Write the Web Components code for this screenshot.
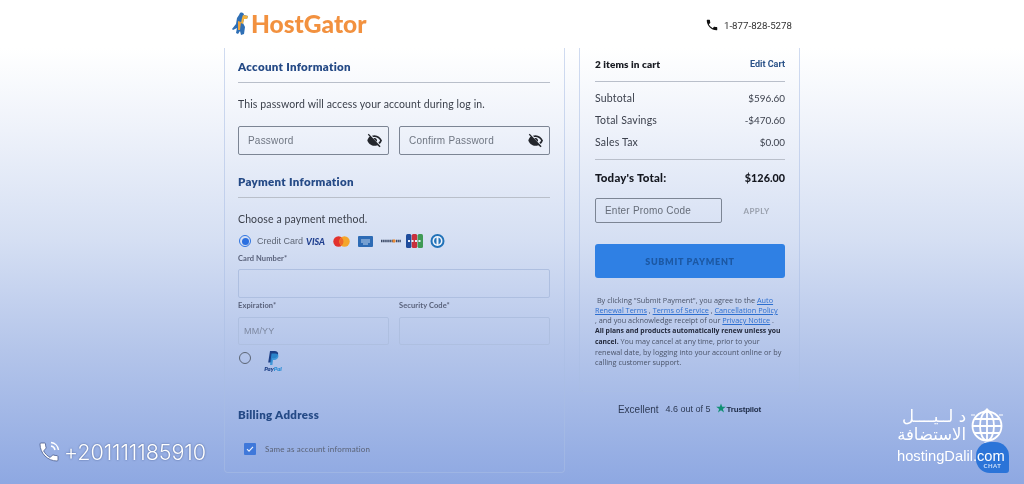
<!DOCTYPE html>
<html lang="en">
<head>
<meta charset="utf-8">
<title>HostGator checkout</title>
<style>
  html, body { margin: 0; height: 484px; overflow: hidden; }
  body {
    font-family: 'Lato', sans-serif;
    background: linear-gradient(180deg, #fff 0, #fff 48px, #eef2fa 130px, #d5dff3 240px, #b4c5ea 350px, #8ea8e2 484px);
    color: #2b3140;
    filter: blur(.35px);
  }
  .page { display: flex; justify-content: flex-start; gap: 14px; padding-left: 224px; align-items: flex-start; }
  .side { display: flex; flex-direction: column; align-items: center; width: 221px; }
</style>
</head>
<body>
<site-header></site-header>
<div class="page">
  <checkout-form></checkout-form>
  <div class="side">
    <order-summary></order-summary>
    <trust-line></trust-line>
  </div>
</div>
<phone-badge></phone-badge>
<brand-badge></brand-badge>

<script>
const PHONE = 'M6.6 10.8c1.4 2.8 3.8 5.1 6.6 6.6l2.2-2.2c.3-.3.7-.4 1-.2 1.1.4 2.3.6 3.6.6.6 0 1 .4 1 1V20c0 .6-.4 1-1 1C10.6 21 3 13.4 3 4c0-.6.4-1 1-1h3.5c.6 0 1 .4 1 1 0 1.3.2 2.5.6 3.6.1.3 0 .7-.2 1z';
const EYE_OFF = 'M12 6.5c3.8 0 7.2 2.2 9 5.5-.7 1.4-1.7 2.5-2.9 3.4l2.3 2.3c1.5-1.4 2.7-3.5 3.6-5.7C22 7 17.400 3.500 12 3.500c-1.500 0-2.900.3-4.200.8l2.200 2.200c.6-.1 1.300-.2 2-.2zM2.700 1.300 1.300 2.700l3 3C2.700 7 1.300 9.300.5 12c1.500 4.500 6.100 8.500 11.500 8.500 1.600 0 3.100-.3 4.500-.9l3.800 3.100 1.400-1.400z';

class SiteHeader extends HTMLElement {
  connectedCallback() {
    this.attachShadow({ mode: 'open' });
    this.shadowRoot.innerHTML = `
      <style>
        :host { display: flex; height: 48px; background: #fff; align-items: center; padding-left: 231px; }
        .logo { display: flex; align-items: center; gap: 2px; width: 474px; }
        .name { font: 900 24.500px 'Lato', sans-serif; color: #f2913f; letter-spacing: 0; position: relative; top: -1px; }
        .phone { display: flex; align-items: center; gap: 5px; font: 400 9.700px 'Roboto', sans-serif; color: #333; position: relative; top: 1px; }
      </style>
      <div class="logo">
        <svg width="18" height="25" viewBox="0 0 18 25">
          <path d="M9 1c2-1 4 0 4 2l4 1-1 3-3 0-1 4 2 4-1 7-3 1-1-4-2 3-2-1 1-5-4 2-1-1 4-5 1-6 2-3z" fill="#2f6fb5"/>
          <path d="M12 3l5 1-1 3-3 0-1 5-2-1 1-5z" fill="#f4b23c"/>
          <path d="M7 9l3 1-1 8-2 0z" fill="#f0a23a"/>
        </svg>
        <span class="name">HostGator</span>
      </div>
      <div class="phone">
        <svg width="14" height="14" viewBox="0 0 24 24"><path d="${PHONE}" fill="#111"/></svg>
        <span>1-877-828-5278</span>
      </div>`;
  }
}

class SectionTitle extends HTMLElement {
  connectedCallback() {
    this.attachShadow({ mode: 'open' });
    this.shadowRoot.innerHTML = `
      <style>
        :host { display: block; font: 800 11.500px 'Lato', sans-serif; color: #254a86; letter-spacing: .3px; line-height: 14px; }
        :host([rule]) { border-bottom: 1px solid #b9bfca; padding-bottom: 8px; }
      </style>
      <slot></slot>`;
  }
}

class TextField extends HTMLElement {
  connectedCallback() {
    this.attachShadow({ mode: 'open' });
    const eye = this.hasAttribute('eye')
      ? `<svg width="15" height="15" viewBox="0 0 24 24"><path d="${EYE_OFF}" fill="#23262c"/><path d="M12 8a4 4 0 0 0-2 .5l5.500 5.500A4 4 0 0 0 12 8z" fill="#23262c"/></svg>`
      : '';
    this.shadowRoot.innerHTML = `
      <style>
        :host { display: flex; align-items: center; justify-content: space-between; box-sizing: border-box; height: 29px; padding: 0 6px 1px 9px;
          border: 1px solid #7c8594; border-radius: 2px; font: 400 10px 'Liberation Sans', sans-serif; color: #6f7682; letter-spacing: .2px; }
        :host([pale]) { border-color: #aebfe0; padding-bottom: 0; }
      </style>
      <span><slot></slot></span>${eye}`;
  }
}

class FieldLabel extends HTMLElement {
  connectedCallback() {
    this.attachShadow({ mode: 'open' });
    this.shadowRoot.innerHTML = `
      <style>:host { display: block; font: 700 7.500px 'Lato', sans-serif; color: #59617a; line-height: 10px; letter-spacing: .1px; }</style>
      <slot></slot>`;
  }
}

class CardLogos extends HTMLElement {
  connectedCallback() {
    this.attachShadow({ mode: 'open' });
    this.shadowRoot.innerHTML = `
      <style>
        :host { display: flex; align-items: center; gap: 8px; }
        .visa { font: italic 900 9px 'Lato', sans-serif; color: #1f3f8f; width: 19px; }
      </style>
      <span class="visa">VISA</span>
      <svg width="17" height="11" viewBox="0 0 17 11"><circle cx="5.500" cy="5.500" r="5.200" fill="#e2322d"/><circle cx="11.500" cy="5.500" r="5.200" fill="#f5a62b"/><path d="M8.500 1.400a5.200 5.200 0 0 1 0 8.200 5.200 5.200 0 0 1 0-8.200z" fill="#f0692a"/></svg>
      <svg width="15" height="11" viewBox="0 0 15 11"><rect width="15" height="11" rx="1" fill="#2d6bb5"/><path d="M3 4h9M3 6h9M5 8h5" stroke="#cfe0f4" stroke-width=".9"/></svg>
      <svg width="20" height="6" viewBox="0 0 20 6"><path d="M0 3h12" stroke="#3c4a66" stroke-width="2.400" stroke-dasharray="1.500 .6"/><circle cx="13" cy="3" r="1.700" fill="#e98a35"/><path d="M15 3h5" stroke="#3c4a66" stroke-width="2.400" stroke-dasharray="1.500 .6"/></svg>
      <svg width="17" height="14" viewBox="0 0 17 14" style="margin-left:-3px"><rect width="5.400" height="14" rx="1.500" fill="#1f4c9c"/><rect x="5.800" width="5.400" height="14" rx="1.500" fill="#c9303d"/><rect x="11.600" width="5.400" height="14" rx="1.500" fill="#3f9a55"/><path d="M2 7h13" stroke="#e8eef8" stroke-width="2" stroke-dasharray="2 1.500"/></svg>
      <svg width="15" height="14" viewBox="0 0 15 14" style="margin-left:-1px"><circle cx="7.500" cy="7" r="7" fill="#2172b8"/><circle cx="7.500" cy="7" r="5" fill="#eef3fb"/><path d="M6.500 3.500a3.700 3.700 0 0 0 0 7zM8.500 3.500a3.700 3.700 0 0 1 0 7z" fill="#2172b8"/></svg>`;
  }
}

class RadioDot extends HTMLElement {
  connectedCallback() {
    this.attachShadow({ mode: 'open' });
    this.shadowRoot.innerHTML = `
      <style>
        :host { display: block; box-sizing: border-box; width: 12px; height: 12px; border-radius: 50%; border: 1px solid #5b6474; flex: none; }
        :host([on]) { border-color: #2f74e0; padding: 1.500px; }
        :host([on]) i { display: block; width: 100%; height: 100%; border-radius: 50%; background: #2a6fe0; }
      </style>
      <i></i>`;
  }
}

class CheckoutForm extends HTMLElement {
  connectedCallback() {
    this.attachShadow({ mode: 'open' });
    this.shadowRoot.innerHTML = `
      <style>
        :host { display: block; box-sizing: border-box; width: 341px; height: 425px; padding: 12px 14px 0 13px; border: 1px solid rgba(170,190,228,.55); border-top: 0;
          border-radius: 0 0 4px 4px; font: 400 10.500px 'Lato', sans-serif; color: #3a3f4a; }
        .lead { line-height: 14px; letter-spacing: .12px; }
        .pair { display: grid; grid-template-columns: 151px 151px; gap: 10px; }
        .method { display: flex; align-items: center; padding-left: 1px; }
        .cc { font: 400 9px 'Liberation Sans', sans-serif; color: #5e6675; margin: 0 3px 0 6px; }
        .check { display: flex; align-items: center; gap: 9px; font: 400 8px 'Lato', sans-serif; color: #5a6275; margin: 21px 0 0 6px; letter-spacing: .15px; }
        .box { width: 12px; height: 12px; display: block; }
        .paypal { display: flex; align-items: flex-start; gap: 11px; margin-top: 6px; height: 21px; padding-left: 1px; }
        .paypal radio-dot { margin-top: 1px; }
        .pp { display: flex; flex-direction: column; align-items: center; gap: 1px; width: 22px; }
        .pp b { font: italic 800 6px 'Lato', sans-serif; color: #1d3f86; line-height: 6px; }
        .pp b span { color: #2d8fd6; }
      </style>
      <section-title rule>Account Information</section-title>
      <div class="lead" style="margin-top:14px">This password will access your account during log in.</div>
      <div class="pair" style="margin-top:15px">
        <text-field eye>Password</text-field>
        <text-field eye>Confirm Password</text-field>
      </div>
      <section-title rule style="margin-top:20px">Payment Information</section-title>
      <div class="lead" style="margin-top:14px">Choose a payment method.</div>
      <div class="method" style="margin-top:8px;height:14px">
        <radio-dot on></radio-dot>
        <span class="cc">Credit Card</span>
        <card-logos></card-logos>
      </div>
      <field-label style="margin-top:6px">Card Number*</field-label>
      <text-field pale style="margin-top:5px"></text-field>
      <div class="pair" style="margin-top:3px">
        <field-label>Expiration*</field-label>
        <field-label>Security Code*</field-label>
      </div>
      <div class="pair" style="margin-top:6px">
        <text-field pale style="height:28px;font-size:9px;color:#7d88a0;padding-left:5px">MM/YY</text-field>
        <text-field pale style="height:28px"></text-field>
      </div>
      <div class="paypal">
        <radio-dot></radio-dot>
        <div class="pp">
          <svg width="11" height="14" viewBox="0 0 11 14"><path d="M2 0h4.500c2.600 0 4 1.300 3.600 3.600C9.700 6 8 7.200 5.600 7.200H4L3.200 11.500H.2z" fill="#1d3f86"/><path d="M3.500 2.500h4c1.800 0 3.200 1 2.900 3.100-.4 2.300-2 3.500-4.300 3.500H5L4.400 14H2z" fill="#2d8fd6" opacity=".85"/></svg>
          <b>Pay<span>Pal</span></b>
        </div>
      </div>
      <section-title style="margin-top:36px">Billing Address</section-title>
      <div class="check">
        <svg class="box" viewBox="0 0 12 12"><rect width="12" height="12" rx="1" fill="#3f78da"/><path d="M3 6.200l2 2 4-4.400" fill="none" stroke="#e6eefc" stroke-width="1.200"/></svg>
        <span>Same as account information</span>
      </div>`;
  }
}

class SummaryRow extends HTMLElement {
  connectedCallback() {
    this.attachShadow({ mode: 'open' });
    this.shadowRoot.innerHTML = `
      <style>
        :host { display: flex; justify-content: space-between; align-items: center; height: 22px; font: 400 10.500px 'Lato', sans-serif; color: #3c414d; letter-spacing: .2px; }
        :host([total]) { font-weight: 900; font-size: 11.500px; color: #14171f; }
        .v { font-size: .94em; letter-spacing: 0; }
      </style>
      <span><slot></slot></span><span class="v">${this.getAttribute('value')}</span>`;
  }
}

class OrderSummary extends HTMLElement {
  connectedCallback() {
    this.attachShadow({ mode: 'open' });
    this.shadowRoot.innerHTML = `
      <style>
        :host { display: block; box-sizing: border-box; width: 221px; height: 344px; padding: 9px 14px 0 15px; border: 1px solid rgba(170,190,228,.55); border-top: 0;
          border-radius: 0 0 4px 4px; font: 400 10px 'Lato', sans-serif; }
        .top { display: flex; justify-content: space-between; align-items: center; height: 14px; padding-bottom: 10px; border-bottom: 1px solid #b9bfca; }
        .top b { font: 800 10px 'Lato', sans-serif; color: #181b22; letter-spacing: .1px; }
        .top a { font: 700 9px 'Roboto', sans-serif; color: #2a5288; }
        .rows { margin-top: 5px; padding-bottom: 6px; border-bottom: 1px solid #b9bfca; }
        .promo { display: flex; align-items: center; margin-top: 10px; }
        .input { box-sizing: border-box; width: 127px; height: 25px; padding-left: 9px; display: flex; align-items: center; border: 1px solid #7c8594; border-radius: 2px;
          font: 400 10px 'Liberation Sans', sans-serif; color: #666d79; letter-spacing: .2px; }
        .apply { flex: 1; text-align: center; font: 700 8px 'Lato', sans-serif; color: #9aa1ae; letter-spacing: .4px; padding-left: 6px; }
        .submit { display: flex; align-items: center; justify-content: center; height: 34px; margin-top: 21px; background: #2f80e4; border-radius: 3px;
          font: 800 9px 'Lato', sans-serif; letter-spacing: .7px; color: #1c58a4; }
        .terms { margin: 17px 0 0; font: 400 7.300px/10px 'Open Sans', sans-serif; color: #4a5368; }
        .terms a { color: #2d6fd0; text-decoration: underline; }
        .terms b { color: #22283a; font-size: 6.800px; }
      </style>
      <div class="top"><b>2 items in cart</b><a>Edit Cart</a></div>
      <div class="rows">
        <summary-row value="$596.60">Subtotal</summary-row>
        <summary-row value="-$470.60">Total Savings</summary-row>
        <summary-row value="$0.00">Sales Tax</summary-row>
      </div>
      <summary-row total value="$126.00" style="margin-top:6px">Today's Total:</summary-row>
      <div class="promo"><div class="input">Enter Promo Code</div><div class="apply">APPLY</div></div>
      <div class="submit">SUBMIT PAYMENT</div>
      <p class="terms">&nbsp;By clicking "Submit Payment", you agree to the <a>Auto Renewal Terms</a> , <a>Terms of Service</a> , <a>Cancellation Policy</a><br>, and you acknowledge receipt of our <a>Privacy Notice</a> .<br><b>All plans and products automatically renew unless you cancel.</b> You may cancel at any time, prior to your renewal date, by logging into your account online or by calling customer support.</p>`;
  }
}

class TrustLine extends HTMLElement {
  connectedCallback() {
    this.attachShadow({ mode: 'open' });
    this.shadowRoot.innerHTML = `
      <style>
        :host { display: flex; align-items: center; margin-top: 10px; height: 14px; font: 400 9px 'Liberation Sans', sans-serif; color: #2d3a55; }
        .ex { font-size: 10px; margin-right: 7px; }
        .tp { font-weight: 700; font-size: 8px; color: #22304c; letter-spacing: -.2px; }
        svg { margin: 0 1px 2px 5px; }
      </style>
      <span class="ex">Excellent</span><span>4.6 out of 5</span>
      <svg width="10" height="10" viewBox="0 0 24 24"><path d="M12 1l3 8h8.500l-7 5.200 2.700 8.300L12 17.400l-7.200 5.100 2.700-8.300L.5 9H9z" fill="#0f8f73"/></svg>
      <span class="tp">Trustpilot</span>`;
  }
}

class PhoneBadge extends HTMLElement {
  connectedCallback() {
    this.attachShadow({ mode: 'open' });
    this.shadowRoot.innerHTML = `
      <style>
        :host { position: absolute; left: 37px; top: 439px; display: flex; align-items: center; gap: 3px; font: 300 21.600px 'Inter', sans-serif; color: #fff;
          letter-spacing: -.1px; text-shadow: 0 0 2px rgba(50,70,120,.8); }
      </style>
      <svg width="24" height="24" viewBox="0 0 24 24">
        <path d="${PHONE}" fill="#fff" stroke="#46598c" stroke-width=".8"/>
        <path d="M14 6a5 5 0 0 1 4 4M14 2.500a8.500 8.500 0 0 1 7.500 7.500" fill="none" stroke="#fff" stroke-width="1.500"/>
      </svg>
      <span>+201111185910</span>`;
  }
}

class BrandBadge extends HTMLElement {
  connectedCallback() {
    this.attachShadow({ mode: 'open' });
    this.shadowRoot.innerHTML = `
      <style>
        :host { position: absolute; left: 897px; top: 408px; width: 112px; height: 70px; color: #fff; display: block; }
        .ar { position: absolute; left: 0; top: 0; width: 69px; font: 400 16.500px/18px 'DejaVu Sans', sans-serif; direction: rtl; white-space: nowrap; }
        .globe { position: absolute; left: 72px; top: 0; }
        .site { position: absolute; left: 0; top: 40px; font: 400 14.700px 'Liberation Sans', sans-serif; white-space: nowrap; z-index: 2; }
        .chat { position: absolute; left: 79px; top: 34px; width: 33px; height: 31px; border-radius: 14px 14px 3px 14px; background: #2b74d8; color: #cfe0f8;
          font: 700 6px 'Lato', sans-serif; display: flex; align-items: flex-end; justify-content: center; padding-bottom: 4px; box-sizing: border-box; letter-spacing: .5px; }
      </style>
      <div class="ar"><div>د لــيــــل</div><div>الاستضافة</div></div>
      <svg class="globe" width="36" height="38" viewBox="0 0 36 38">
        <g fill="none" stroke="#fff" stroke-width="1.800">
          <circle cx="18" cy="18" r="14.500"/>
          <ellipse cx="18" cy="18" rx="7" ry="14.500"/>
          <path d="M3.500 18h29M5.500 11h25M5.500 25h25M18 3.500v29"/>
          <path d="M2 7l4 0M34 7l-4 0" stroke-width="1.200"/>
        </g>
        <path d="M18 0l3 3h-6zM18 37l3-3h-6z" fill="#fff"/>
      </svg>
      <div class="chat">CHAT</div>
      <div class="site">hostingDalil.com</div>`;
  }
}

customElements.define('site-header', SiteHeader);
customElements.define('section-title', SectionTitle);
customElements.define('text-field', TextField);
customElements.define('field-label', FieldLabel);
customElements.define('card-logos', CardLogos);
customElements.define('radio-dot', RadioDot);
customElements.define('checkout-form', CheckoutForm);
customElements.define('summary-row', SummaryRow);
customElements.define('order-summary', OrderSummary);
customElements.define('trust-line', TrustLine);
customElements.define('phone-badge', PhoneBadge);
customElements.define('brand-badge', BrandBadge);
</script>
</body>
</html>
